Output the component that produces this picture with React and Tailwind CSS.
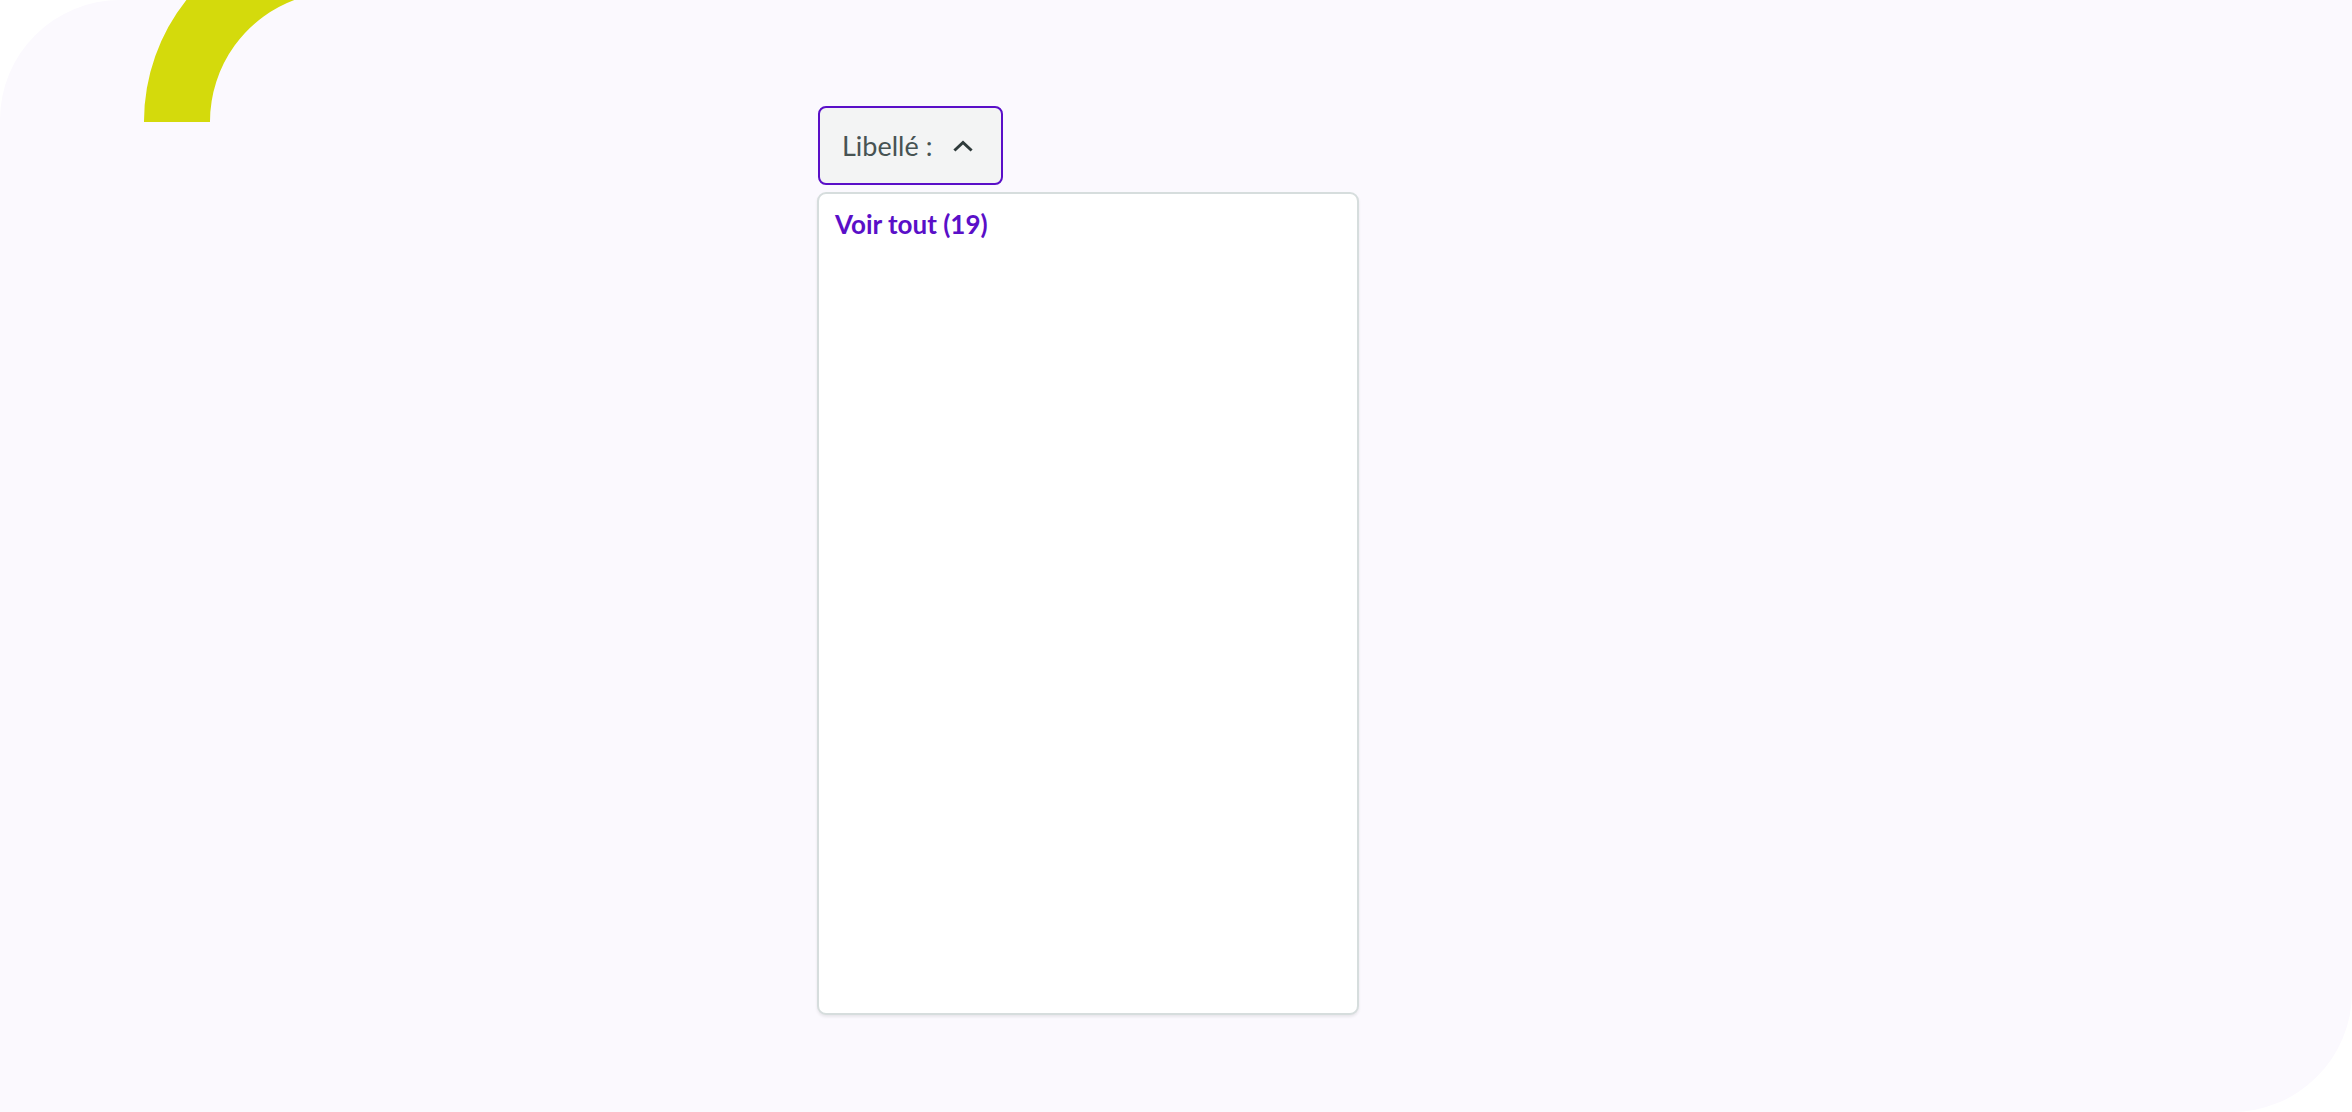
import React from "react";

function ChevronUp() {
  return (
    <svg width="24" height="24" viewBox="0 0 24 24" fill="none" className="shrink-0">
      <path d="M4.5 15.5L12 8.5l7.5 7" stroke="#2f3b3b" strokeWidth="3" strokeLinecap="square" strokeLinejoin="miter" />
    </svg>
  );
}

function Arc() {
  // yellow quarter ring peeking from the top edge
  return (
    <svg
      width="340"
      height="122"
      viewBox="0 0 340 122"
      className="absolute left-0 top-0 pointer-events-none"
    >
      <path
        d="M144 122 A195 195 0 0 1 188 -2 L300 -2 A130 130 0 0 0 210 122 Z"
        fill="#d4da0c"
      />
    </svg>
  );
}

export default function App() {
  return (
    <div className="w-[2352px] h-[1112px] bg-white" style={{ fontFamily: "Lato, 'Noto Sans', sans-serif" }}>
      <div className="relative h-full w-full bg-[#fbf9fe] rounded-tl-[120px] rounded-br-[120px] overflow-hidden">
        <Arc />

        <div className="pl-[817px] pt-[106px] flex flex-col items-start gap-[7px]">
          {/* Trigger */}
          <button className="ml-px h-[79px] w-[185px] flex items-center gap-[19px] pl-[22px] pr-4 bg-[#f3f4f4] border-2 border-[#5a0fc8] rounded-[8px] text-[27px] text-[#475353] leading-none">
            <span>Libellé :</span>
            <ChevronUp />
          </button>

          {/* Menu */}
          <div className="w-[542px] h-[823px] bg-white border-2 border-[#d6dddd] rounded-[9px] shadow-[0_2px_3px_rgba(0,0,0,0.08)] pl-[16px] pt-[12px]">
            <div className="text-[26px] font-bold text-[#5a0fc8] leading-[36px]">Voir tout (19)</div>
          </div>
        </div>
      </div>
    </div>
  );
}
